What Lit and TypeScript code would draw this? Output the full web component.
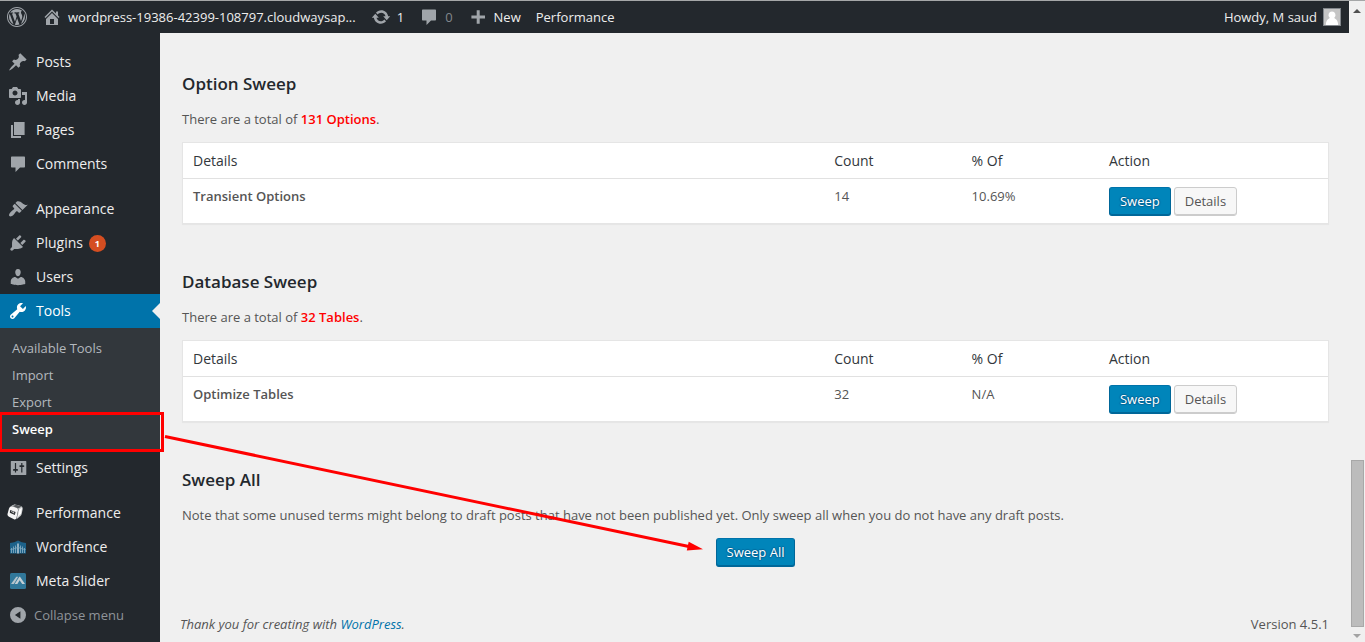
import { LitElement, html, css, svg, nothing } from "lit";
import { customElement, property } from "lit/decorators.js";
import { classMap } from "lit/directives/class-map.js";

const glyphs: Record<string, string> = {
  wordpress:
    "M20 10c0-5.52-4.48-10-10-10S0 4.48 0 10s4.48 10 10 10 10-4.48 10-10zM10 1.01c4.97 0 8.99 4.02 8.99 8.99s-4.02 8.99-8.99 8.99S1.01 14.97 1.01 10 5.03 1.01 10 1.01zM8.01 14.82L4.96 6.61c.49-.03 1.05-.08 1.05-.08.43-.05.38-1.01-.06-.99 0 0-1.29.1-2.13.1-.15 0-.33 0-.52-.01 1.44-2.17 3.9-3.6 6.7-3.6 2.09 0 3.99.79 5.41 2.09-.6-.08-1.45.35-1.45 1.42 0 .66.38 1.22.79 1.88.31.54.5 1.22.5 2.21 0 1.34-1.27 4.48-1.27 4.48l-2.71-7.5c.48-.03.75-.16.75-.16.43-.05.38-1.1-.05-1.08 0 0-1.3.11-2.14.11-.78 0-2.11-.11-2.11-.11-.43-.02-.48 1.06-.05 1.08l.84.08 1.12 3.04zm6.02 2.15L16.64 10s.67-1.69.39-3.81c.63 1.14.94 2.42.94 3.81 0 2.96-1.56 5.58-3.94 6.97zM2.68 6.77L6.5 17.25c-2.67-1.3-4.47-4.08-4.47-7.25 0-1.16.2-2.23.65-3.23zm7.45 4.53l2.29 6.25c-.75.27-1.57.42-2.42.42-.72 0-1.41-.11-2.06-.3z",
  home: "M16 8.5l1.53 1.53-1.06 1.06L10 4.6l-6.47 6.49-1.06-1.06L10 2.5l4 4v-2h2v4zm-6-2.46l6 5.99V18H4v-5.97zM12 17v-5H8v5h4z",
  update:
    "M10.2 3.28c3.53 0 6.43 2.61 6.92 6h2.08l-3.5 4-3.5-4h2.32c-.45-1.97-2.21-3.45-4.32-3.45-1.45 0-2.73.71-3.54 1.78L4.95 5.66C6.23 4.2 8.11 3.28 10.2 3.28zm-.4 13.44c-3.52 0-6.43-2.61-6.92-6H.8l3.5-4c1.17 1.33 2.33 2.67 3.5 4H5.48c.45 1.97 2.21 3.45 4.32 3.45 1.45 0 2.73-.71 3.54-1.78l1.71 1.95c-1.28 1.46-3.15 2.38-5.25 2.38z",
  plus: "M17 8.5v3h-5.3v5.3h-3v-5.3H3.4v-3h5.3V3.2h3v5.3z",
  comments:
    "M4 2.5h12c.6 0 1 .4 1 1v9c0 .6-.4 1-1 1h-4l-4.5 4.4v-4.4H4c-.6 0-1-.4-1-1v-9c0-.6.4-1 1-1z",
  posts:
    "M10.44 3.02l1.82-1.82 6.36 6.35-1.83 1.82c-1.05-.68-2.48-.57-3.41.36l-.75.75c-.92.93-1.04 2.35-.35 3.41l-1.83 1.82-2.41-2.41-2.8 2.79c-.42.42-3.38 2.71-3.8 2.29s1.86-3.39 2.28-3.81l2.79-2.79L4.1 9.36l1.83-1.82c1.05.69 2.48.57 3.4-.36l.75-.75c.93-.92 1.05-2.35.36-3.41z",
  media:
    "M13 11V4c0-.55-.45-1-1-1h-1.67L9 1H5L3.67 3H2c-.55 0-1 .45-1 1v7c0 .55.45 1 1 1h10c.55 0 1-.45 1-1zM7 4.5c1.38 0 2.5 1.12 2.5 2.5S8.38 9.5 7 9.5 4.5 8.38 4.5 7 5.62 4.5 7 4.5zM14 6h5v10.5c0 1.38-1.12 2.5-2.5 2.5S14 17.88 14 16.5s1.12-2.5 2.5-2.5c.17 0 .34.02.5.05V9h-3V6zm-4 8.05V13h2v3.5c0 1.38-1.12 2.5-2.5 2.5S7 17.88 7 16.5 8.12 14 9.5 14c.17 0 .34.02.5.05z",
  pages: "M6 15V2h10.6v13H6zm-1 1h8v2H3V5h2v11z",
  appearance:
    "M14.48 11.06L7.41 3.99l1.5-1.5c.5-.56 2.3-.47 3.51.32 1.21.8 1.43 1.28 2.91 2.1 1.18.64 2.45 1.26 4.45.85zm-.71.71L6.7 4.7 4.93 6.47c-.39.39-.39 1.02 0 1.41l1.06 1.06c.39.39.39 1.03 0 1.42-.6.6-1.43 1.11-2.21 1.69-.35.26-.7.53-1.01.84C1.43 14.23.4 16.08 1.4 17.07c.99 1 2.84-.03 4.18-1.36.31-.31.58-.66.85-1.02.57-.78 1.08-1.61 1.69-2.21.39-.39 1.02-.39 1.41 0l1.06 1.06c.39.39 1.02.39 1.41 0z",
  plugins:
    "M13.11 4.36L9.87 7.6 8 5.73l3.24-3.24c.35-.34 1.05-.2 1.56.32.52.51.66 1.21.31 1.55zm-8 1.77l.91-1.12 9.01 9.01-1.19.84c-.71.71-2.63 1.16-3.82 1.16H6.14L4.9 17.26c-.59.59-1.54.59-2.12 0-.59-.58-.59-1.53 0-2.12l1.24-1.24v-3.88c0-1.13.4-3.19 1.09-3.89zm7.26 3.97l3.24-3.24c.34-.35 1.04-.21 1.55.31.52.51.66 1.21.31 1.55l-3.24 3.25z",
  users:
    "M10 9.25c-2.27 0-2.73-3.44-2.73-3.44C7 4.02 7.82 2 9.97 2c2.16 0 2.98 2.02 2.71 3.81 0 0-.41 3.44-2.68 3.44zm0 2.57L12.72 10c2.39 0 4.52 2.33 4.52 4.53v2.49s-3.65 1.13-7.24 1.13c-3.65 0-7.24-1.13-7.24-1.13v-2.49c0-2.25 1.94-4.48 4.47-4.48z",
  tools:
    "M16.68 9.77c-1.34 1.34-3.3 1.67-4.95.99l-5.41 6.52c-.99.99-2.59.99-3.58 0s-.99-2.59 0-3.57l6.52-5.42c-.68-1.65-.35-3.61.99-4.95 1.28-1.28 3.12-1.62 4.72-1.06l-2.89 2.89 2.82 2.82 2.86-2.87c.53 1.58.18 3.39-1.08 4.65zM3.81 16.21c.4.39 1.04.39 1.43 0 .4-.4.4-1.04 0-1.43-.39-.4-1.03-.4-1.43 0-.39.39-.39 1.03 0 1.43z",
  settings:
    "M18.3 16.5V3.5c0-.3-.2-.5-.5-.5H3.3c-.3 0-.5.2-.5.5v13c0 .3.2.5.5.5h14.5c.3 0 .5-.2.5-.5zM8 11h1.2c.5 0 .8.4.8.9s-.3.9-.8.9H8.1v1.7h-1.2v-1.7H5.8c-.5 0-.8-.4-.8-.9s.3-.9.8-.9h1.1V5h1.2V11zM13.2 9h-1.1c-.5 0-.8-.4-.8-.9s.3-.9.8-.9h1.1V5h1.2v2.2h1.1c.5 0 .8.4.8.9s-.3.9-.8.9h-1.1v5.5h-1.2z",
  collapse:
    "M10 2a8 8 0 1 0 0 16a8 8 0 1 0 0-16zM12.4 6.3v7.4L6.9 10z",
};

const pictures: Record<string, unknown> = {
  performance: svg`
    <g transform="translate(0 1)">
      <path d="M2 2.500L6.500.300L14 2.300L9.500 5z" fill="#8d9195"/>
      <path d="M1 4.500Q1.500 2.500 3.500 2.500L8 3.600Q10.300 4.300 10 6.500L8.500 14Q8 16 6 15.300L1 12.800Q-.8 12-.5 10z" fill="#f4f4f4"/>
      <path d="M3.500 2.200Q5 .300 7 .700L13 2.300Q15 3 14.700 5L13.800 9.500Q13.500 11 12.500 12L8.500 15.300L10.400 5.500Q9.500 4 8 3.600z" fill="#c9cbcc"/>
      <path d="M4.500 2L8 .800L13.600 2.500L10.200 4.500z" fill="#55595c"/>
      <path d="M11.200 5.600L14 3.800L13 9.500L9.800 13z" fill="#fff"/>
      <path d="M2.200 6L7.600 8L6.800 10.900L1.800 8.800z" fill="#2b2e31"/>
      <path d="M3.500 7L4.500 8.600M5.300 7.500L5.800 9.300" stroke="#f4f4f4" stroke-width=".8"/>
    </g>`,
  wordfence: svg`
    <path d="M2 6Q6.500 5.500 10 3.500Q13.500 5.500 18 6V16.500H2z" fill="#1d628a"/>
    <path d="M3.500 11V16M5.500 9.500V16M7.500 8.500V16M12.500 8.500V16M14.500 9.500V16M16.500 11V16" stroke="#7fa8bf" stroke-width=".9"/>
    <path d="M10 6.500V16.500" stroke="#d2dde4" stroke-width="1.300"/>
    <path d="M2.500 12.500Q6 12.300 8 11Q10 10 12 11Q14 12.300 17.500 12.500" stroke="#7fa8bf" stroke-width=".8" fill="none"/>`,
  slider: svg`
    <rect x="2" y="2" width="16" height="16" rx="1.500" fill="#31789a"/>
    <path d="M3 13L8.300 5.800H10.300L5.800 13z" fill="#b4c4cc"/>
    <path d="M6.700 13L11.300 5.800H12L17 13H14.200L11.600 9.300L9.400 13z" fill="#c2ced4"/>`,
};

const icon = (name: string) => html`
  <svg class="icon" viewBox="0 0 20 20" width="20" height="20" aria-hidden="true">
    ${pictures[name] ?? svg`<path fill="currentColor" fill-rule="evenodd" d=${glyphs[name]}/>`}
  </svg>
`;

const base = css`
  * {
    box-sizing: border-box;
  }
  a {
    color: inherit;
    text-decoration: none;
  }
  .icon {
    display: block;
    flex: none;
    overflow: visible;
  }
`;

@customElement("admin-bar")
class AdminBar extends LitElement {
  static styles = [
    base,
    css`
      :host {
        display: block;
        background: #23282d;
        color: #eee;
        font-size: 13px;
        line-height: 32px;
      }
      .bar {
        display: flex;
        align-items: center;
        justify-content: space-between;
        padding: 0 8px 0 7px;
      }
      .group {
        display: flex;
        align-items: center;
        gap: 15px;
      }
      .item {
        display: flex;
        align-items: center;
        gap: 6px;
        white-space: nowrap;
      }
      .item .icon {
        color: #a0a5aa;
      }
      .dim {
        color: #82878c;
      }
      .avatar {
        display: block;
      }
    `,
  ];

  render() {
    return html`
      <nav class="bar" aria-label="Toolbar">
        <div class="group">
          <a class="item" href="#about" aria-label="About WordPress">${icon("wordpress")}</a>
          <a class="item" href="#site">${icon("home")}wordpress-19386-42399-108797.cloudwaysap...</a>
          <a class="item" href="#updates">${icon("update")}1</a>
          <a class="item dim" href="#comments">${icon("comments")}0</a>
          <a class="item" href="#new">${icon("plus")}New</a>
          <a class="item" href="#performance">Performance</a>
        </div>
        <a class="item" href="#profile">
          Howdy, M saud
          <svg class="avatar" width="18" height="18" viewBox="0 0 18 18" aria-hidden="true">
            <rect width="18" height="18" fill="#82878c" />
            <rect x="1" y="1" width="16" height="16" fill="#c5c5c5" />
            <path fill="#fff" d="M9 3.500a3.600 3.600 0 0 1 2.300 6.300c.2 1.200 3.700 1.200 3.900 7.200H2.800c.2-6 3.700-6 3.900-7.200A3.600 3.600 0 0 1 9 3.500z" />
          </svg>
        </a>
      </nav>
    `;
  }
}

interface MenuEntry {
  label: string;
  icon: string;
  badge?: number;
  current?: boolean;
  children?: string[];
}

const menuGroups: MenuEntry[][] = [
  [
    { label: "Posts", icon: "posts" },
    { label: "Media", icon: "media" },
    { label: "Pages", icon: "pages" },
    { label: "Comments", icon: "comments" },
  ],
  [
    { label: "Appearance", icon: "appearance" },
    { label: "Plugins", icon: "plugins", badge: 1 },
    { label: "Users", icon: "users" },
    {
      label: "Tools",
      icon: "tools",
      current: true,
      children: ["Available Tools", "Import", "Export", "Sweep"],
    },
    { label: "Settings", icon: "settings" },
  ],
  [
    { label: "Performance", icon: "performance" },
    { label: "Wordfence", icon: "wordfence" },
    { label: "Meta Slider", icon: "slider" },
  ],
];

@customElement("admin-menu")
class AdminMenu extends LitElement {
  static styles = [
    base,
    css`
      :host {
        display: block;
        background: #23282d;
        color: #eee;
        font-size: 14px;
        padding: 12px 0 10px;
      }
      ul {
        list-style: none;
        margin: 0;
        padding: 0;
      }
      .group {
        margin-bottom: 11px;
      }
      .group:last-of-type {
        margin-bottom: 0;
      }
      .entry,
      .collapse {
        display: flex;
        align-items: center;
        gap: 8px;
        height: 34px;
        padding: 0 8px;
        line-height: 18px;
        white-space: nowrap;
      }
      .entry .icon {
        color: #a0a5aa;
      }
      .entry.current {
        position: relative;
        background: #0073aa;
        color: #fff;
      }
      .entry.current .icon {
        color: #fff;
      }
      .entry.current::after {
        content: "";
        position: absolute;
        right: 0;
        top: 9px;
        border: 8px solid transparent;
        border-left-width: 0;
        border-right-color: #f0f0f0;
      }
      .badge {
        width: 17px;
        height: 17px;
        margin-left: -2px;
        border-radius: 50%;
        background: #d54e21;
        color: #fff;
        font-size: 9px;
        font-weight: 700;
        line-height: 17px;
        text-align: center;
      }
      .submenu {
        background: #32373c;
        padding: 7px 0 8px;
        font-size: 13px;
        line-height: 27px;
        color: #b4b9be;
      }
      .submenu li {
        padding: 0 12px;
      }
      .submenu .active {
        position: relative;
        color: #fff;
        font-weight: 600;
      }
      .marker {
        position: absolute;
        inset: -4px -4px -9px -1px;
        border: 3px solid #f00;
        pointer-events: none;
      }
      .pointer {
        position: absolute;
        left: 100%;
        top: 0;
        width: 545px;
        height: 140px;
        overflow: visible;
        pointer-events: none;
      }
      .collapse {
        width: 100%;
        gap: 6px;
        border: 0;
        background: none;
        font: inherit;
        font-size: 13px;
        color: #a0a5aa;
        text-align: left;
      }
      .collapse-label {
        color: #8f9499;
      }
    `,
  ];

  private renderChildren(children: string[]) {
    return html`
      <ul class="submenu">
        ${children.map((label) => {
          const active = label === "Sweep";
          return html`
            <li class=${classMap({ active })}>
              <a href="#tools">${label}</a>
              ${active
                ? html`
                    <span class="marker"></span>
                    <svg class="pointer" viewBox="0 0 545 140" aria-hidden="true">
                      <path d="M5 20.500L530 130.700" stroke="#f00" stroke-width="3" />
                      <path d="M543 133.300L526.800 134.600L528.700 125.800z" fill="#f00" />
                    </svg>
                  `
                : nothing}
            </li>
          `;
        })}
      </ul>
    `;
  }

  render() {
    return html`
      <nav aria-label="Main menu">
        ${menuGroups.map(
          (group) => html`
            <ul class="group">
              ${group.map(
                (entry) => html`
                  <li>
                    <a class=${classMap({ entry: true, current: !!entry.current })} href="#menu">
                      ${icon(entry.icon)}<span>${entry.label}</span>
                      ${entry.badge ? html`<span class="badge">${entry.badge}</span>` : nothing}
                    </a>
                    ${entry.children ? this.renderChildren(entry.children) : nothing}
                  </li>
                `
              )}
            </ul>
          `
        )}
        <button class="collapse" type="button">
          ${icon("collapse")}<span class="collapse-label">Collapse menu</span>
        </button>
      </nav>
    `;
  }
}

const buttonStyles = css`
  .button {
    height: 29px;
    padding: 0 10px 2px;
    border: 1px solid #ccc;
    border-radius: 3px;
    background: #f7f7f7;
    box-shadow: inset 0 -1px 0 #ccc;
    color: #555;
    font: inherit;
    font-size: 13px;
    line-height: 24px;
    white-space: nowrap;
  }
  .button.primary {
    border-color: #0073aa #006799 #006799;
    background: #0085ba;
    box-shadow: inset 0 -1px 0 #006799;
    color: #fff;
    text-shadow: 0 -1px 1px #006799, 1px 0 1px #006799, 0 1px 1px #006799, -1px 0 1px #006799;
  }
`;

@customElement("sweep-section")
class SweepSection extends LitElement {
  @property() heading = "";
  @property() total = "";
  @property() name = "";
  @property() count = "";
  @property() share = "";

  static styles = [
    base,
    buttonStyles,
    css`
      :host {
        display: block;
      }
      h3 {
        margin: 0 0 13px;
        color: #23282d;
        font-size: 17px;
        font-weight: 600;
        line-height: 24px;
      }
      p {
        margin: 0 0 13px;
        line-height: 20px;
      }
      .total {
        color: #f00;
        font-weight: 600;
      }
      table {
        width: 100%;
        table-layout: fixed;
        border: 1px solid #e5e5e5;
        border-spacing: 0;
        background: #fff;
        box-shadow: 0 1px 1px rgba(0, 0, 0, 0.04);
      }
      .name {
        width: 56%;
      }
      .number {
        width: 12%;
      }
      .action {
        width: 20%;
      }
      th {
        height: 36px;
        padding: 0 10px;
        border-bottom: 1px solid #e1e1e1;
        color: #32373c;
        font-size: 14px;
        font-weight: 400;
        text-align: left;
      }
      td {
        padding: 8px 10px 7px;
        line-height: 18px;
        vertical-align: top;
      }
      .title {
        font-weight: 600;
      }
      .actions {
        display: flex;
        gap: 3px;
      }
    `,
  ];

  render() {
    return html`
      <h3>${this.heading}</h3>
      <p>There are a total of <span class="total">${this.total}</span>.</p>
      <table>
        <thead>
          <tr>
            <th class="name" scope="col">Details</th>
            <th class="number" scope="col">Count</th>
            <th class="number" scope="col">% Of</th>
            <th class="action" scope="col">Action</th>
          </tr>
        </thead>
        <tbody>
          <tr>
            <td class="title">${this.name}</td>
            <td>${this.count}</td>
            <td>${this.share}</td>
            <td>
              <div class="actions">
                <button class="button primary" type="button">Sweep</button>
                <button class="button" type="button">Details</button>
              </div>
            </td>
          </tr>
        </tbody>
      </table>
    `;
  }
}

@customElement("app-root")
class AppRoot extends LitElement {
  static styles = [
    base,
    buttonStyles,
    css`
      :host {
        display: block;
        font-family: "Open Sans", "Noto Sans", sans-serif;
        font-size: 13px;
        color: #555;
        background: #f0f0f0;
      }
      .window {
        display: grid;
        grid-template-columns: minmax(0, 1fr) 16px;
        min-height: 100vh;
        border-top: 1px solid #a5a7a8;
      }
      .page {
        display: grid;
        grid-template-columns: 160px minmax(0, 1fr);
        grid-template-rows: auto 1fr;
      }
      .toolbar {
        grid-column: 1 / -1;
      }
      .sidebar {
        position: relative;
        z-index: 1;
      }
      .content {
        display: flex;
        flex-direction: column;
        padding: 39px 20px 8px;
      }
      .sections {
        display: flex;
        flex-direction: column;
        gap: 46px;
        padding-left: 2px;
      }
      h3 {
        margin: 0 0 13px;
        color: #23282d;
        font-size: 17px;
        font-weight: 600;
        line-height: 24px;
      }
      p {
        margin: 0 0 13px;
        line-height: 20px;
      }
      .center {
        display: flex;
        justify-content: center;
      }
      footer {
        display: flex;
        justify-content: space-between;
        margin-top: auto;
        line-height: 20px;
      }
      .thanks {
        font-style: italic;
      }
      .thanks a {
        color: #0073aa;
      }
      .scroll {
        display: flex;
        flex-direction: column;
        align-items: center;
        padding: 8px 0 4px;
      }
      .up,
      .down {
        border: 4px solid transparent;
      }
      .up {
        border-top-width: 0;
        border-bottom-color: #505050;
      }
      .down {
        border-bottom-width: 0;
        border-top-color: #a3a3a3;
      }
      .track {
        display: flex;
        flex: 1;
        flex-direction: column;
        justify-content: flex-end;
        padding: 0 0 7px;
      }
      .thumb {
        width: 13px;
        height: 27.2%;
        border: 1px solid #a8a8a8;
        background: #bcbcbc;
      }
    `,
  ];

  render() {
    return html`
      <div class="window">
        <div class="page">
          <admin-bar class="toolbar"></admin-bar>
          <admin-menu class="sidebar"></admin-menu>
          <main class="content">
            <div class="sections">
              <sweep-section
                heading="Option Sweep"
                total="131 Options"
                name="Transient Options"
                count="14"
                share="10.69%"
              ></sweep-section>
              <sweep-section
                heading="Database Sweep"
                total="32 Tables"
                name="Optimize Tables"
                count="32"
                share="N/A"
              ></sweep-section>
              <section>
                <h3>Sweep All</h3>
                <p>
                  Note that some unused terms might belong to draft posts that have not been
                  published yet. Only sweep all when you do not have any draft posts.
                </p>
                <div class="center">
                  <button class="button primary" type="button">Sweep All</button>
                </div>
              </section>
            </div>
            <footer>
              <span class="thanks">Thank you for creating with <a href="#wordpress">WordPress</a>.</span>
              <span>Version 4.5.1</span>
            </footer>
          </main>
        </div>
        <div class="scroll" aria-hidden="true">
          <span class="up"></span>
          <div class="track"><div class="thumb"></div></div>
          <span class="down"></span>
        </div>
      </div>
    `;
  }
}
